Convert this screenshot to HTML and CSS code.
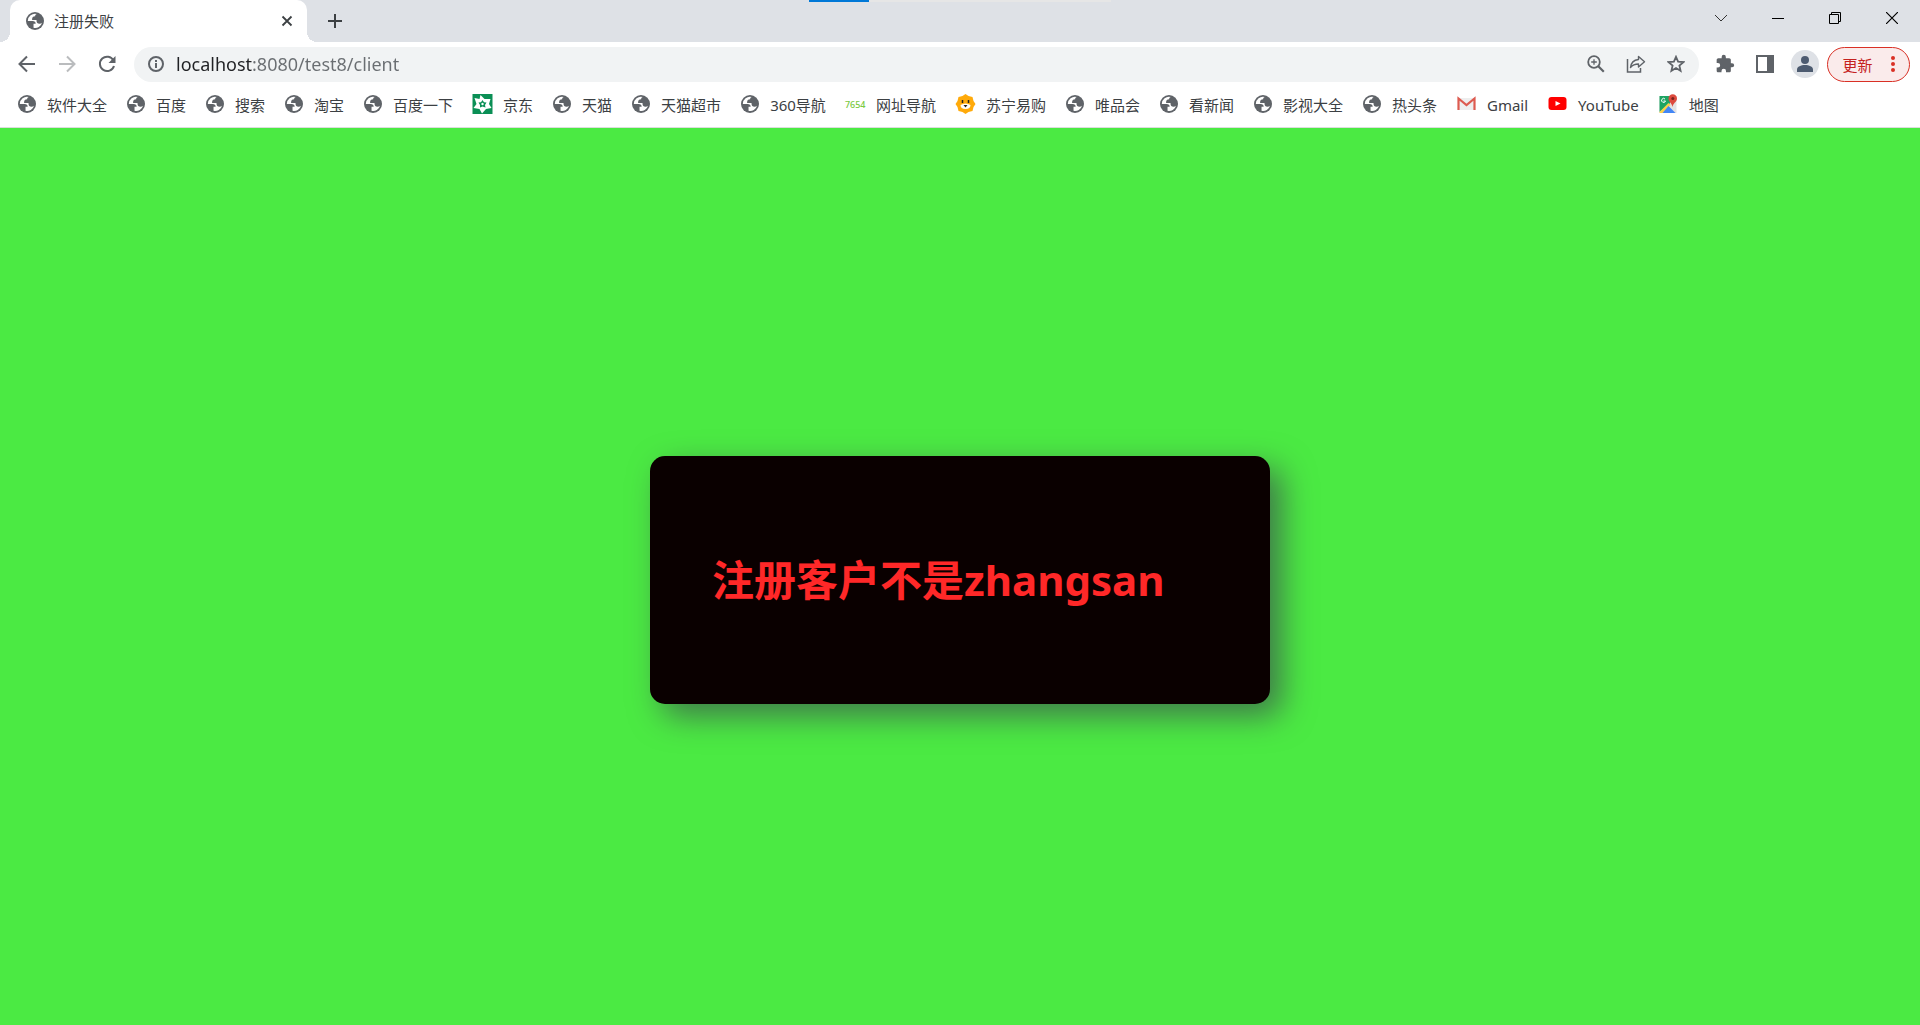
FILE: index.html
```
<!DOCTYPE html>
<html lang="zh-CN">
<head>
<meta charset="UTF-8">
<title>注册失败</title>
<link rel="stylesheet" href="styles.css">
</head>
<body>
<!-- shared icons -->
<svg class="sprite" aria-hidden="true">
	<symbol id="globe" viewBox="0 0 16 16">
		<circle cx="8" cy="8" r="8" fill="#5f6368"/>
		<path fill="#fff" d="M1.600 8H5.930C7.710 8.010 8.600 8.860 8.580 10.550H6.690V13.970A6.200 6.200 0 0 0 14.230 9.530C13.730 10.150 13 10.460 12.040 10.460C10.260 10.460 9.360 9.590 9.360 7.850V7.200H5.450C5.230 4.930 6.110 3.770 8.110 3.770C8.110 2.790 8.650 2.120 9.730 1.760A6.400 6.400 0 0 0 1.600 8Z"/>
	</symbol>
</svg>

<header class="browser">
	<div class="progress"></div>
	<div class="tabstrip">
		<div class="tab">
			<svg class="favicon"><use href="#globe"/></svg>
			<span class="tab-title">注册失败</span>
			<button class="tab-close" aria-label="关闭标签页"><svg width="12" height="12" viewBox="0 0 12 12"><path d="M1.500 1.500L10.500 10.500M10.500 1.500L1.500 10.500" stroke="#3c4043" stroke-width="1.800"/></svg></button>
		</div>
		<button class="new-tab" aria-label="新标签页"><svg width="16" height="16" viewBox="0 0 16 16"><path d="M8 1V15M1 8H15" stroke="#3c4043" stroke-width="2"/></svg></button>
		<div class="window-buttons">
			<button aria-label="搜索标签页"><svg width="14" height="14" viewBox="0 0 14 14"><path d="M1 4L7 10L13 4" stroke="#333" fill="none"/></svg></button>
			<button aria-label="最小化"><svg width="12" height="12" viewBox="0 0 12 12"><path d="M0 6.500H12" stroke="#000"/></svg></button>
			<button aria-label="还原"><svg width="12" height="12" viewBox="0 0 12 12"><path d="M.5 2.500H9.500V11.500H.5ZM2.500 2.500V.5H11.500V9.500H9.500" stroke="#000" fill="none"/></svg></button>
			<button aria-label="关闭"><svg width="12" height="12" viewBox="0 0 12 12"><path d="M0 0L12 12M12 0L0 12" stroke="#000" stroke-width="1.200"/></svg></button>
		</div>
	</div>

	<div class="toolbar">
		<button class="tool" aria-label="后退"><svg width="18" height="18" viewBox="0 0 18 18"><path d="M17 9H2M9 1.500L1.500 9L9 16.500" stroke="#5f6368" stroke-width="2" fill="none"/></svg></button>
		<button class="tool" aria-label="前进"><svg width="18" height="18" viewBox="0 0 18 18"><path d="M1 9H16M9 1.500L16.500 9L9 16.500" stroke="#babcbe" stroke-width="2" fill="none"/></svg></button>
		<button class="tool" aria-label="重新加载"><svg width="18" height="18" viewBox="0 0 18 18"><path d="M15.500 5.500A7.200 7.200 0 1 0 16 11" stroke="#5f6368" stroke-width="2" fill="none"/><path d="M17.500 1V8H10.500Z" fill="#5f6368"/></svg></button>
		<div class="omnibox">
			<svg class="info" width="16" height="16" viewBox="0 0 16 16"><circle cx="8" cy="8" r="7" stroke="#5f6368" stroke-width="2" fill="none"/><path d="M8 7V12M8 4V6" stroke="#5f6368" stroke-width="2"/></svg>
			<input class="url" type="text" value="localhost:8080/test8/client" aria-label="地址栏">
			<button class="tool" aria-label="缩放"><svg width="18" height="18" viewBox="0 0 18 18"><circle cx="7" cy="7" r="5.800" stroke="#5f6368" stroke-width="1.800" fill="none"/><path d="M11 11L16.800 16.800" stroke="#5f6368" stroke-width="2.200"/><path d="M7 4.200V9.800M4.200 7H9.800" stroke="#5f6368" stroke-width="1.300"/></svg></button>
			<button class="tool" aria-label="分享"><svg width="20" height="18" viewBox="0 0 20 18"><path d="M1.500 4V17H14.500V13" stroke="#5f6368" stroke-width="1.500" fill="none"/><path d="M12.500 1.500L18.500 6.800L12.500 12V9C8.500 9 6.500 10 4.500 12.500C5 8 8 5 12.500 4.500Z" stroke="#5f6368" stroke-width="1.400" fill="none" stroke-linejoin="round"/></svg></button>
			<button class="tool" aria-label="收藏"><svg width="18" height="18" viewBox="0 0 18 18"><path d="M9 1.800L11.100 6.600L16.400 7.100L12.400 10.600L13.600 15.800L9 13L4.400 15.800L5.600 10.600L1.600 7.100L6.900 6.600Z" stroke="#5f6368" stroke-width="1.800" fill="none"/></svg></button>
		</div>
		<button class="tool" aria-label="扩展程序"><svg width="20" height="20" viewBox="0 0 24 24"><path fill="#5f6368" d="M20.500 11H19V7c0-1.100-.9-2-2-2h-4V3.500a2.500 2.500 0 0 0-5 0V5H4c-1.100 0-2 .9-2 2v3.800h1.500a2.700 2.700 0 0 1 0 5.400H2V20c0 1.100.9 2 2 2h3.800v-1.500a2.700 2.700 0 0 1 5.400 0V22H17c1.100 0 2-.9 2-2v-4h1.500a2.500 2.500 0 0 0 0-5z"/></svg></button>
		<button class="tool" aria-label="侧边栏"><svg width="18" height="18" viewBox="0 0 18 18"><path fill="#5f6368" fill-rule="evenodd" d="M0 0H18V18H0ZM2 2V16H11V2Z"/></svg></button>
		<button class="tool" aria-label="个人资料"><svg width="28" height="28" viewBox="0 0 28 28"><circle cx="14" cy="14" r="14" fill="#dee1e6"/><circle cx="14" cy="10" r="4" fill="#4d5b70"/><path d="M6 22V19.500C6 16.500 10 15 14 15S22 16.500 22 19.500V22Z" fill="#4d5b70"/></svg></button>
		<button class="update">更新<svg width="4" height="16" viewBox="0 0 4 16" fill="#d93025"><circle cx="2" cy="2" r="2"/><circle cx="2" cy="8" r="2"/><circle cx="2" cy="14" r="2"/></svg></button>
	</div>

	<nav class="bookmarks">
		<a href="#"><svg><use href="#globe"/></svg>软件大全</a>
		<a href="#"><svg><use href="#globe"/></svg>百度</a>
		<a href="#"><svg><use href="#globe"/></svg>搜索</a>
		<a href="#"><svg><use href="#globe"/></svg>淘宝</a>
		<a href="#"><svg><use href="#globe"/></svg>百度一下</a>
		<a href="#"><svg class="wide" viewBox="0 0 20 20"><path d="M0 0H20V20H0Z" fill="#0a8f55"/><path d="M8 1L12 5L18 5L16.500 10L19 14L13.500 15L9.500 19.500L7 15L1 14L4 10L2 4L7 5Z" fill="#fff"/><path d="M10 6L11.500 8.200L14 8.500L12.500 11L13 13.500L10 12.500L7.500 13.500L7.500 11L6 8.500L8.500 8.200Z" fill="#0a8f55"/><circle cx="10" cy="10" r="1.200" fill="#fff"/></svg>京东</a>
		<a href="#"><svg><use href="#globe"/></svg>天猫</a>
		<a href="#"><svg><use href="#globe"/></svg>天猫超市</a>
		<a href="#"><svg><use href="#globe"/></svg>360导航</a>
		<a href="#"><span class="mark">7654</span>网址导航</a>
		<a href="#"><svg class="wide" viewBox="0 0 20 20"><path d="M10 0L13 2L17 3L18 7L20 10L18 13L17 17L13 18L10 20L7 18L3 17L2 13L0 10L2 7L3 3L7 2Z" fill="#ffaa0a"/><path d="M5 11Q10 8 15 11Q15 15 10 15Q5 15 5 11Z" fill="#fff"/><path d="M7 6V9M13 6V9" stroke="#222" stroke-width="1.500"/><path d="M8 11H12L10 13.500Z" fill="#222"/></svg>苏宁易购</a>
		<a href="#"><svg><use href="#globe"/></svg>唯品会</a>
		<a href="#"><svg><use href="#globe"/></svg>看新闻</a>
		<a href="#"><svg><use href="#globe"/></svg>影视大全</a>
		<a href="#"><svg><use href="#globe"/></svg>热头条</a>
		<a href="#"><svg class="wide" viewBox="0 0 20 20"><path d="M2 4H18V16H2Z" fill="#eee"/><path d="M2 16V4.500L10 11L18 4.500V16" stroke="#dd5b50" stroke-width="2.200" fill="none"/></svg>Gmail</a>
		<a href="#"><svg class="wide" viewBox="0 0 20 20"><rect x="1" y="3" width="18" height="13" rx="3" fill="#f00"/><path d="M8 7L13 9.500L8 12Z" fill="#fff"/></svg>YouTube</a>
		<a href="#"><svg class="wide" viewBox="0 0 20 20"><path d="M1 2H18V19H1Z" fill="#e3e3e3"/><path d="M1 2H14L11 10L1 18Z" fill="#1fa463"/><path d="M1 18L10 9L12 11L4 19H1Z" fill="#fcd047"/><path d="M4 19L10 12L17 19Z" fill="#4286f5"/><path d="M14 13C13.500 9 10 8 10 4.500A4.200 4.200 0 0 1 18.500 4.500C18.500 8 14.500 9 14 13Z" fill="#dd4b3e"/><circle cx="14.300" cy="4.500" r="1.500" fill="#7d231c"/><path d="M6.500 5A2 2 0 1 0 7 7H5" stroke="#fff" fill="none"/></svg>地图</a>
	</nav>
</header>

<main class="page">
	<div class="box">
		<h1>注册客户不是zhangsan</h1>
	</div>
</main>
</body>
</html>
```
FILE: styles.css
```
* {
	box-sizing:border-box;
}
body {
	margin:0;
	min-height:100vh;
	display:flex;
	flex-direction:column;
	background:#4bea43;
	font-family:"Noto Sans", "Noto Sans CJK SC", sans-serif;
}
button {
	display:flex;
	align-items:center;
	justify-content:center;
	padding:0;
	border:0;
	background:none;
	font-family:inherit;
	cursor:pointer;
}
.sprite {
	position:absolute;
	width:0;
	height:0;
}
.browser {
	position:relative;
	background:#fff;
	border-bottom:1px solid #dcdcdc;
}

/* loading strip over the tab row */
.progress {
	position:absolute;
	top:0;
	left:50%;
	width:302px;
	height:2px;
	margin-left:-151px;
	background:linear-gradient(to right, #0078d7 60px, #e6e6e6 60px);
}

.tabstrip {
	display:flex;
	height:42px;
	padding-left:10px;
	background:#dee1e6;
}
.tab {
	position:relative;
	display:flex;
	align-items:center;
	width:297px;
	padding:0 12px 0 16px;
	border-radius:10px 10px 0 0;
	background:#fff;
}
.tab:before, .tab:after {
	content:"";
	position:absolute;
	bottom:0;
	width:10px;
	height:10px;
}
.tab:before {
	right:100%;
	background:radial-gradient(circle at 0 0, #dee1e6 10px, #fff 10px);
}
.tab:after {
	left:100%;
	background:radial-gradient(circle at 100% 0, #dee1e6 10px, #fff 10px);
}
.favicon {
	width:18px;
	height:18px;
}
.tab-title {
	flex:1;
	margin-left:10px;
	font-size:15px;
	line-height:22px;
	color:#3c4043;
}
.tab-close {
	width:16px;
	height:16px;
}
.new-tab {
	width:56px;
}
.window-buttons {
	display:flex;
	height:36px;
	margin-left:auto;
}
.window-buttons button {
	width:57px;
}

.toolbar {
	display:flex;
	align-items:center;
	height:44px;
	padding:0 10px 0 7px;
}
.tool {
	flex:none;
	width:40px;
	height:35px;
}
.omnibox {
	flex:1;
	display:flex;
	align-items:center;
	height:35px;
	margin:0 6px 0 7px;
	padding:0 3px 0 14px;
	border-radius:18px;
	background:#f1f3f4;
}
.info {
	flex:none;
	margin-right:12px;
}
.url {
	flex:1;
	min-width:0;
	height:26px;
	padding:0;
	border:0;
	outline:0;
	font-family:inherit;
	font-size:18px;
	/* host is darker than the rest of the address */
	background:linear-gradient(to right, #202124 77px, #6a6e72 77px);
	-webkit-background-clip:text;
	background-clip:text;
	color:transparent;
}
.update {
	gap:18px;
	width:83px;
	height:35px;
	margin-left:2px;
	border:1px solid #d93025;
	border-radius:18px;
	background:#faebeb;
	font-size:15px;
	color:#c5221f;
}

.bookmarks {
	display:flex;
	align-items:center;
	gap:19px;
	height:41px;
	padding:0 17px 4px;
	overflow:hidden;
}
.bookmarks a {
	display:flex;
	align-items:center;
	flex:none;
	gap:10px;
	font-size:15px;
	line-height:22px;
	color:#3c4043;
	text-decoration:none;
}
.bookmarks svg {
	width:18px;
	height:18px;
	margin:0 1px 2px;
}
.bookmarks svg.wide {
	width:21px;
	height:20px;
	margin:0 0 2px;
}
.mark {
	width:21px;
	font-size:9px;
	font-weight:500;
	color:#7ac943;
}

.page {
	flex:1;
	display:flex;
	align-items:center;
	justify-content:center;
	padding-top:6px;
}
.box {
	width:620px;
	padding:62px;
	border-radius:15px;
	background:#0a0000;
	box-shadow:12px 12px 32px #40784a;
}
.box h1 {
	margin:31px 0;
	font-size:42px;
	line-height:62px;
	color:#ff2828;
}
```
